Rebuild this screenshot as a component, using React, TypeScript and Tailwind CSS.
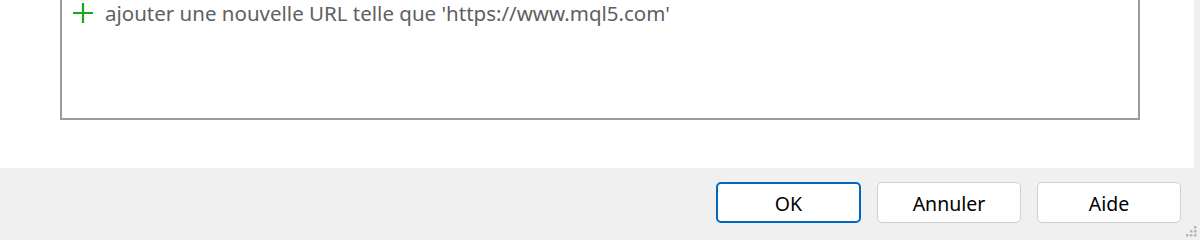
import React from "react";

const font = { fontFamily: '"Segoe UI", "Noto Sans", "Liberation Sans", sans-serif' };

function Grip() {
  const dots = [
    [8, 0],
    [4, 4],
    [8, 4],
    [0, 8],
    [4, 8],
    [8, 8],
  ];
  return (
    <svg width="12" height="12" viewBox="0 0 12 12" className="absolute right-[2px] bottom-[2px]">
      {dots.map(([x, y], i) => (
        <rect key={i} x={x} y={y} width="2.5" height="2.5" fill="#b4b4b4" />
      ))}
    </svg>
  );
}

function DialogButton({ label, primary }: { label: string; primary?: boolean }) {
  return (
    <button
      className={`h-[41px] rounded-[5px] bg-white text-[19.5px] text-black flex items-center justify-center pt-[3px] ${
        primary ? "w-[145px] border-2 border-[#0067c0]" : "w-[144px] border border-[#d0d0d0]"
      }`}
    >
      {label}
    </button>
  );
}

export default function App() {
  return (
    <div className="w-[1200px] h-[240px] bg-[#f0f0f0] flex flex-col relative" style={font}>
      <div className="w-[1194px] h-[168px] bg-white pl-[60px]">
        <div className="w-[1080px] h-[120px] border-x-2 border-b-2 border-[#979ba2] pl-[10px] flex items-start">
          <div className="flex items-center h-[26px] gap-[11px]">
            <svg width="22" height="22" viewBox="0 0 22 22">
              <path d="M11 1v20M1 11h20" stroke="#1aa81a" strokeWidth="2.2" />
            </svg>
            <span className="text-[20.5px] text-[#606060] leading-none pt-[1px]">
              ajouter une nouvelle URL telle que 'https://www.mql5.com'
            </span>
          </div>
        </div>
      </div>
      <div className="flex-1 flex justify-end items-start pt-[14px] pr-[19px] gap-[16px]">
        <DialogButton label="OK" primary />
        <DialogButton label="Annuler" />
        <DialogButton label="Aide" />
      </div>
      <Grip />
    </div>
  );
}
